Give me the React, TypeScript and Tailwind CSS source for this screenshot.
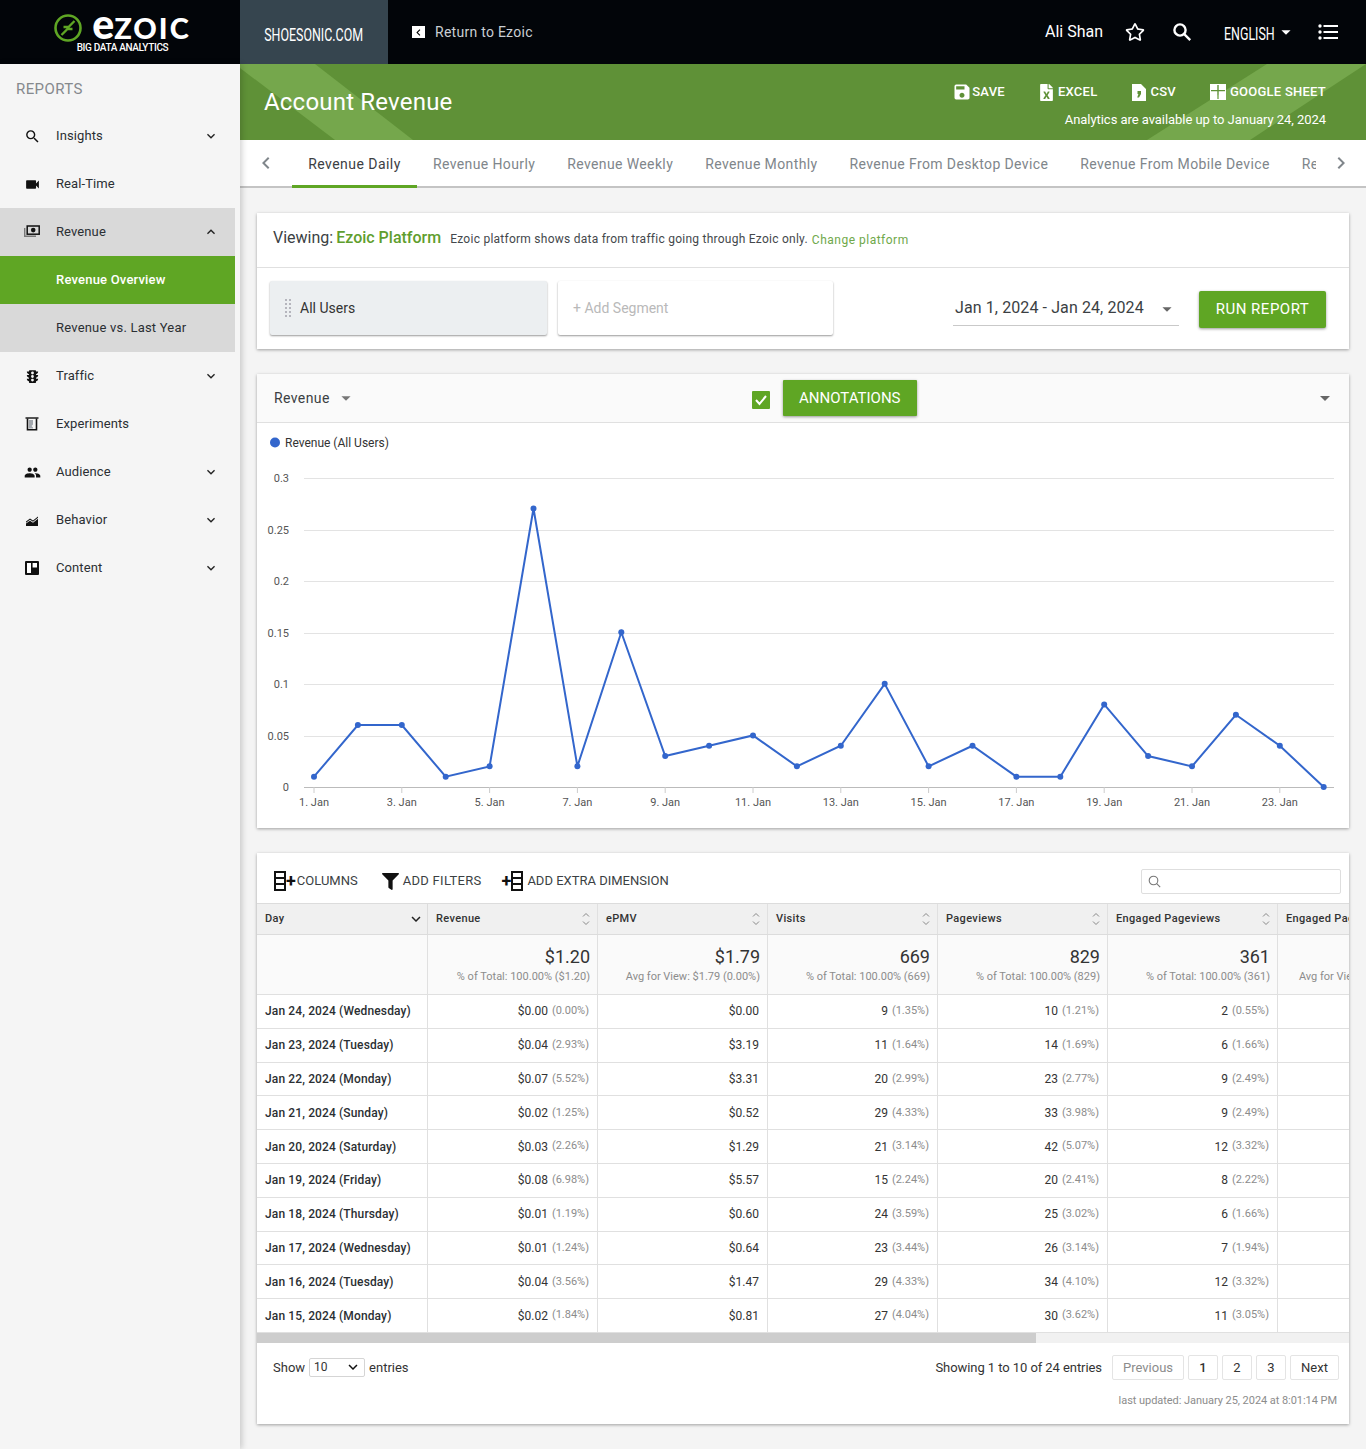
import { FaFileExcel, FaFilter, FaRegStar } from "react-icons/fa";
import {
  MdArrowDropDown,
  MdChevronLeft,
  MdChevronRight,
  MdExpandLess,
  MdExpandMore,
  MdGroup,
  MdSave,
  MdSearch,
  MdTraffic,
  MdVideocam,
} from "react-icons/md";

const VALUES = [0.01, 0.06, 0.06, 0.01, 0.02, 0.27, 0.02, 0.15, 0.03, 0.04, 0.05, 0.02, 0.04, 0.1, 0.02, 0.04, 0.01, 0.01, 0.08, 0.03, 0.02, 0.07, 0.04, 0];
const TABS = ["Revenue Hourly", "Revenue Weekly", "Revenue Monthly", "Revenue From Desktop Device", "Revenue From Mobile Device"];
const COLUMNS = ["Revenue", "ePMV", "Visits", "Pageviews", "Engaged Pageviews"];

const TOTALS = [
  { value: "$1.20", note: "% of Total: 100.00% ($1.20)" },
  { value: "$1.79", note: "Avg for View: $1.79 (0.00%)" },
  { value: "669", note: "% of Total: 100.00% (669)" },
  { value: "829", note: "% of Total: 100.00% (829)" },
  { value: "361", note: "% of Total: 100.00% (361)" },
];

const ROWS = [
  ["Jan 24, 2024 (Wednesday)", "$0.00", "(0.00%)", "$0.00", "9", "(1.35%)", "10", "(1.21%)", "2", "(0.55%)"],
  ["Jan 23, 2024 (Tuesday)", "$0.04", "(2.93%)", "$3.19", "11", "(1.64%)", "14", "(1.69%)", "6", "(1.66%)"],
  ["Jan 22, 2024 (Monday)", "$0.07", "(5.52%)", "$3.31", "20", "(2.99%)", "23", "(2.77%)", "9", "(2.49%)"],
  ["Jan 21, 2024 (Sunday)", "$0.02", "(1.25%)", "$0.52", "29", "(4.33%)", "33", "(3.98%)", "9", "(2.49%)"],
  ["Jan 20, 2024 (Saturday)", "$0.03", "(2.26%)", "$1.29", "21", "(3.14%)", "42", "(5.07%)", "12", "(3.32%)"],
  ["Jan 19, 2024 (Friday)", "$0.08", "(6.98%)", "$5.57", "15", "(2.24%)", "20", "(2.41%)", "8", "(2.22%)"],
  ["Jan 18, 2024 (Thursday)", "$0.01", "(1.19%)", "$0.60", "24", "(3.59%)", "25", "(3.02%)", "6", "(1.66%)"],
  ["Jan 17, 2024 (Wednesday)", "$0.01", "(1.24%)", "$0.64", "23", "(3.44%)", "26", "(3.14%)", "7", "(1.94%)"],
  ["Jan 16, 2024 (Tuesday)", "$0.04", "(3.56%)", "$1.47", "29", "(4.33%)", "34", "(4.10%)", "12", "(3.32%)"],
  ["Jan 15, 2024 (Monday)", "$0.02", "(1.84%)", "$0.81", "27", "(4.04%)", "30", "(3.62%)", "11", "(3.05%)"],
];

function ColumnsIcon() {
  return (
    <svg width="12" height="20" viewBox="0 0 12 20" fill="none" stroke="#111" strokeWidth="2">
      <rect x="1" y="1" width="10" height="18" />
      <path d="M1 7h10M1 13h10" />
    </svg>
  );
}

function RevenueIcon() {
  return (
    <svg width="16" height="14" viewBox="0 0 16 14" fill="none">
      <path d="M0.700 3v8.300H12" stroke="#777" strokeWidth="1.400" />
      <rect x="3.200" y="1" width="12" height="8.200" stroke="#111" strokeWidth="1.500" />
      <circle cx="9.200" cy="5.100" r="2.300" fill="#111" />
    </svg>
  );
}

function BehaviorIcon() {
  return (
    <svg width="14" height="14" viewBox="0 0 14 14" fill="#111">
      <path d="M1 8.500 5 5.500l3 2 5-4v1.200L8 8.800l-3-2-4 3z" />
      <path d="M1 10.500 5 7.800l3 2 5-4V13H1z" />
    </svg>
  );
}

function ExperimentIcon() {
  return (
    <svg width="14" height="14" viewBox="0 0 14 14" fill="none">
      <path d="M0.500 1h13" stroke="#111" strokeWidth="1.400" />
      <path d="M2.500 1.500v11.300h9V1.500" stroke="#111" strokeWidth="1.600" />
      <path d="M4 3h4v4.500L6.500 9 8 10.500V11.500H4z" fill="#a3a8ae" />
    </svg>
  );
}

function ContentIcon() {
  return (
    <svg width="14" height="14" viewBox="0 0 14 14">
      <rect width="14" height="14" rx="1" fill="#111" />
      <path d="M2 2h4v10H2zM7.600 2H12v4.500H7.600z" fill="#fff" />
    </svg>
  );
}

function Logo() {
  return (
    <div className="flex flex-col items-center pl-[5px]">
      <div className="flex items-center gap-[10px] h-[28px] mt-[14px]">
        <svg width="28" height="28" viewBox="0 0 28 28" fill="none" stroke="#5fa624" strokeWidth="2.600">
          <circle cx="14" cy="14" r="12.500" />
          <path d="M7.500 21l6-6h5M9.500 13h5l6-6" strokeWidth="2.300" />
        </svg>
        <span className="font-['Lato',sans-serif] font-black text-white leading-[28px] whitespace-nowrap flex items-baseline -translate-y-[2px]">
          <span className="text-[41px] leading-[28px]">e</span>
          <span className="text-[29px] leading-[28px] uppercase tracking-[2px]">zoic</span>
        </span>
      </div>
      <span className="text-white text-[10px] leading-none font-medium tracking-[-0.35px] mt-[1px]">BIG DATA ANALYTICS</span>
    </div>
  );
}

function Header() {
  return (
    <header className="h-16 bg-[#020509] flex items-stretch text-white">
      <div className="w-[240px] shrink-0 flex justify-center">
        <Logo />
      </div>
      <div className="w-[148px] bg-[#36454f] flex items-center justify-center pt-[5px] overflow-hidden">
        <span className="inline-block scale-x-[0.69] text-[18px] whitespace-nowrap">SHOESONIC.COM</span>
      </div>
      <div className="flex items-center gap-[10px] pl-[24px] text-[14px] tracking-[0.27px] text-[#c9ced3]">
        <span className="w-[13px] h-[12px] bg-white flex items-center justify-center">
          <MdChevronLeft className="text-black" size={13} />
        </span>
        Return to Ezoic
      </div>
      <div className="ml-auto flex items-center pr-[28px]">
        <span className="text-[16px]">Ali Shan</span>
        <FaRegStar className="ml-[22px]" size={20} />
        <svg className="ml-[27px]" width="20" height="20" viewBox="0 0 20 20" fill="none" stroke="white" strokeWidth="2.400">
          <circle cx="8" cy="8" r="5.600" />
          <path d="m12.200 12.200 6 6" />
        </svg>
        <span className="ml-[32px] w-[51px] inline-block">
          <span className="inline-block origin-left scale-x-[0.69] text-[18px] pt-[2px]">ENGLISH</span>
        </span>
        <MdArrowDropDown size={22} />
        <svg className="ml-[21px]" width="20" height="16" viewBox="0 0 20 16" fill="white">
          <circle cx="2" cy="2" r="1.700" />
          <circle cx="2" cy="8" r="1.700" />
          <circle cx="2" cy="14" r="1.700" />
          <path d="M5.500 1h14.500v2H5.500zM5.500 7h14.500v2H5.500zM5.500 13h14.500v2H5.500z" />
        </svg>
      </div>
    </header>
  );
}

function NavRow({ icon, label, chevron, tone }: { icon?: React.ReactNode; label: string; chevron?: "up" | "down"; tone?: string }) {
  return (
    <div className={`h-12 flex items-center text-[13px] tracking-[0.1px] ${tone ?? "text-[#2b2f33]"}`}>
      <span className="w-[56px] flex justify-center pl-[8px] shrink-0">{icon}</span>
      <span>{label}</span>
      {chevron === "down" && <MdExpandMore className="ml-auto mr-[16px] text-[#222]" size={16} />}
      {chevron === "up" && <MdExpandLess className="ml-auto mr-[16px] text-[#222]" size={16} />}
    </div>
  );
}

function Sidebar() {
  return (
    <aside className="w-[240px] shrink-0 bg-[#f5f5f5] shadow-[2px_0_6px_rgba(0,0,0,0.18)] z-10 self-stretch">
      <div className="w-[235px]">
        <div className="h-12 flex items-center pl-4 pt-[2px] text-[15px] tracking-[0.4px] text-[#85898d]">REPORTS</div>
        <NavRow icon={<MdSearch size={17} className="text-[#111]" />} label="Insights" chevron="down" />
        <NavRow icon={<MdVideocam size={17} className="text-[#111]" />} label="Real-Time" />
        <div className="bg-[#d9d9d9]">
          <NavRow icon={<RevenueIcon />} label="Revenue" chevron="up" />
          <div className="bg-[#5fa624]">
            <NavRow label="Revenue Overview" tone="text-white font-medium tracking-[0.2px]" />
          </div>
          <NavRow label="Revenue vs. Last Year" tone="text-[#2b2f33] tracking-[0.2px]" />
        </div>
        <NavRow icon={<MdTraffic size={17} className="text-[#111]" />} label="Traffic" chevron="down" />
        <NavRow icon={<ExperimentIcon />} label="Experiments" />
        <NavRow icon={<MdGroup size={17} className="text-[#111]" />} label="Audience" chevron="down" />
        <NavRow icon={<BehaviorIcon />} label="Behavior" chevron="down" />
        <NavRow icon={<ContentIcon />} label="Content" chevron="down" />
      </div>
    </aside>
  );
}

function Banner() {
  return (
    <div className="relative h-[76px] bg-[#5f9137] text-white flex justify-between overflow-hidden">
      <svg className="absolute inset-0" width="1126" height="76" viewBox="0 0 1126 76" fill="#75a74c">
        <path d="M0 4 95 76H173L75 0H0z" />
        <path d="M1027 0 907 76H1010L1126 0z" />
      </svg>
      <h1 className="relative text-[24px] tracking-[0.2px] pl-6 pt-[22px] leading-[32px] text-white">Account Revenue</h1>
      <div className="relative pr-[40px] pt-[19px] flex flex-col items-end">
        <div className="flex items-center text-[13px] tracking-[0.25px] font-medium h-[18px]">
          <MdSave size={20} />
          SAVE
          <FaFileExcel size={17} className="ml-[33px] mr-[3px]" />
          EXCEL
          <svg className="ml-[35px] mr-[4px]" width="14" height="17" viewBox="0 0 14 17" fill="white">
            <path fillRule="evenodd" d="M0 0h9l5 5v12H0zM5.500 7h3.500v3l-2 3.500H5.200l1.200-3.500H5.500z" />
          </svg>
          CSV
          <svg className="ml-[34px] mr-[4px]" width="16" height="16" viewBox="0 0 16 16" fill="white">
            <path fillRule="evenodd" d="M0 0h16v16H0zM7.300 1v5H1v1.200h6.300V15h1.400V7.200H15V6H8.700V1z" />
          </svg>
          GOOGLE SHEET
        </div>
        <div className="text-[13px] mt-[10px] leading-[18px] tracking-[-0.05px]">Analytics are available up to January 24, 2024</div>
      </div>
    </div>
  );
}

function Tabs() {
  return (
    <div className="h-12 bg-white border-b-2 border-[#c4c4c4] flex items-stretch text-[14px] tracking-[0.38px] text-[#80868b]">
      <div className="w-[52px] flex items-center justify-center">
        <MdChevronLeft size={24} className="text-[#80868b]" />
      </div>
      <div className="w-[125px] flex items-center justify-center text-[#3c4043] border-b-[3px] border-[#5fa624] h-[48px] pt-[3px] tracking-[0.45px]">Revenue Daily</div>
      {TABS.map((t) => (
        <div key={t} className="px-4 flex items-center whitespace-nowrap pt-[2px]">{t}</div>
      ))}
      <div className="w-[30px] pl-4 overflow-hidden flex items-center pt-[2px]">Re</div>
      <div className="flex items-center ml-[13px]">
        <MdChevronRight size={24} />
      </div>
    </div>
  );
}

function SegmentCard() {
  return (
    <section className="bg-white shadow-[0_1px_3px_rgba(0,0,0,0.35)] h-[136px]">
      <div className="h-[55px] border-b border-[#e0e0e0] flex items-baseline pl-4 pt-[13px] whitespace-nowrap">
        <span className="text-[16px] text-[#3b3f43]">Viewing:</span>
        <span className="text-[16px] font-medium text-[#5f9e2e] ml-[3px]">Ezoic Platform</span>
        <span className="text-[12px] text-[#44484c] ml-[9px] tracking-[0.25px]">Ezoic platform shows data from traffic going through Ezoic only.</span>
        <span className="text-[12px] text-[#6fa84a] ml-[4px] tracking-[0.5px] translate-y-px">Change platform</span>
      </div>
      <div className="flex items-start pt-[13px] pl-[13px]">
        <div className="w-[277px] h-[54px] bg-[#eceff1] rounded-[2px] shadow-[0_1px_2px_rgba(0,0,0,0.4)] flex items-center text-[14px] text-[#333]">
          <span className="w-[8px] h-[20px] ml-[14px] mr-[8px] bg-[radial-gradient(#b5b5bd_1px,transparent_1.200px)] bg-[length:4px_4px]" />
          All Users
        </div>
        <div className="w-[275px] h-[54px] ml-[11px] bg-white rounded-[2px] shadow-[0_1px_2px_rgba(0,0,0,0.4)] flex items-center pl-[15px] text-[14px] text-[#b9b9b9]">+ Add Segment</div>
        <div className="ml-[120px] mt-[9px] w-[226px] h-[36px] border-b border-[#c9c9c9] flex items-center pl-[2px] text-[16px] text-[#3b3f43] tracking-[0.1px]">
          Jan 1, 2024 - Jan 24, 2024
          <MdArrowDropDown size={22} className="ml-auto mr-[1px] mt-[3px] text-[#666]" />
        </div>
        <button className="ml-[20px] mt-[10px] w-[127px] h-[37px] bg-[#5fa624] text-white text-[15px] tracking-[0.5px] rounded-[2px] shadow-[0_1px_3px_rgba(0,0,0,0.4)]">RUN REPORT</button>
      </div>
    </section>
  );
}

function Chart() {
  const x = (i: number) => 314 + i * 43.9 - 257;
  const y = (v: number) => 787 - v * 1031.6 - 423;
  const pts = VALUES.map((v, i) => `${x(i)},${y(v)}`).join(" ");
  const grid = [
    { v: 0.3, label: "0.3" },
    { v: 0.25, label: "0.25" },
    { v: 0.2, label: "0.2" },
    { v: 0.15, label: "0.15" },
    { v: 0.1, label: "0.1" },
    { v: 0.05, label: "0.05" },
    { v: 0, label: "0" },
  ];
  return (
    <svg width="1092" height="405" viewBox="0 0 1092 405" className="block font-[Roboto,sans-serif]">
      <circle cx="18" cy="19.500" r="5" fill="#3366cc" />
      <text x="28" y="24" fontSize="12" fill="#333">Revenue (All Users)</text>
      {grid.map((g) => (
        <g key={g.label}>
          <line x1="47" x2="1077" y1={Math.ceil(y(g.v)) + 0.5} y2={Math.ceil(y(g.v)) + 0.5} stroke={g.v === 0 ? "#bbb" : "#e3e3e3"} />
          <text x="32" y={Math.ceil(y(g.v)) + 4} fontSize="11" fill="#555" textAnchor="end">{g.label}</text>
        </g>
      ))}
      {VALUES.map((_, i) =>
        i % 2 === 0 ? <line key={i} x1={x(i)} x2={x(i)} y1="364" y2="370" stroke="#ccc" /> : null
      )}
      {VALUES.map((_, i) =>
        i % 2 === 0 ? (
          <text key={i} x={x(i)} y="383" fontSize="11" fill="#555" textAnchor="middle">{`${i + 1}. Jan`}</text>
        ) : null
      )}
      <polyline points={pts} fill="none" stroke="#3366cc" strokeWidth="2" />
      {VALUES.map((v, i) => (
        <circle key={i} cx={x(i)} cy={y(v)} r="3" fill="#3366cc" />
      ))}
    </svg>
  );
}

function ChartCard() {
  return (
    <section className="bg-white shadow-[0_1px_3px_rgba(0,0,0,0.35)] h-[454px] mt-[25px]">
      <div className="h-[49px] bg-[#fafafa] border-b border-[#e0e0e0] flex items-center pl-[17px] text-[14px] tracking-[0.4px] text-[#3b3f43]">
        <span>Revenue</span>
        <MdArrowDropDown size={22} className="ml-[5px] text-[#777]" />
        <span className="ml-[395px] w-[18px] h-[18px] mt-[3px] bg-[#5fa624] rounded-[1px] flex items-center justify-center">
          <svg width="14" height="12" viewBox="0 0 14 12" fill="none" stroke="white" strokeWidth="2">
            <path d="m2 6 3.500 4L12 2" />
          </svg>
        </span>
        <button className="ml-[13px] w-[134px] h-[36px] bg-[#5fa624] text-white text-[15px] tracking-normal rounded-[1px] shadow-[0_1px_3px_rgba(0,0,0,0.4)]">ANNOTATIONS</button>
        <MdArrowDropDown size={24} className="ml-auto mr-[12px] text-[#666]" />
      </div>
      <Chart />
    </section>
  );
}

function SortArrows() {
  return (
    <svg className="ml-auto mr-[7px]" width="8" height="14" viewBox="0 0 8 14" fill="none" stroke="#888" strokeWidth="1">
      <path d="m1 4.500 3-3 3 3M1 9.500l3 3 3-3" />
    </svg>
  );
}

function NumberCell({ value, pct }: { value: string; pct?: string }) {
  return (
    <div className="w-[170px] shrink-0 border-r border-[#e0e0e0] h-full flex items-center justify-end pr-2">
      {value}
      {pct && <span className="ml-[4px] text-[11px] text-[#8c8c8c]">{pct}</span>}
    </div>
  );
}

function DataTable() {
  const cell = "w-[170px] shrink-0 border-r border-[#e0e0e0] h-full";
  return (
    <div className="overflow-hidden">
      <div className="w-[1300px]">
        <div className="h-[32px] bg-[#f0f0f0] flex items-center border-y border-[#dcdcdc] text-[11px] tracking-[0.35px] font-medium text-[#333]">
          <div className="w-[171px] shrink-0 border-r border-[#dcdcdc] h-full flex items-center pl-2">
            Day
            <MdExpandMore size={18} className="ml-auto mr-[2px] text-[#222]" />
          </div>
          {COLUMNS.map((c) => (
            <div key={c} className={`${cell} flex items-center pl-2`}>
              {c}
              <SortArrows />
            </div>
          ))}
          <div className="pl-2 whitespace-nowrap">Engaged Pages</div>
        </div>
        <div className="h-[60px] bg-[#fafafa] flex border-b border-[#e0e0e0]">
          <div className="w-[171px] shrink-0 border-r border-[#e0e0e0]" />
          {TOTALS.map((t) => (
            <div key={t.value} className={`${cell} text-right pr-[7px] pt-[11px]`}>
              <div className="text-[18px] leading-[22px] text-[#333]">{t.value}</div>
              <div className="text-[11px] leading-[14px] mt-[2px] text-[#8c8c8c] whitespace-nowrap">{t.note}</div>
            </div>
          ))}
          <div className="w-[149px] text-right pt-[35px] text-[11px] leading-[14px] text-[#8c8c8c] whitespace-nowrap">Avg for View: 2.30 (0.00%)</div>
        </div>
        {ROWS.map((r) => (
          <div key={r[0]} className="h-[33.8px] flex border-b border-[#e0e0e0] items-center text-[12px] text-[#333]">
            <div className="w-[171px] shrink-0 border-r border-[#e0e0e0] h-full flex items-center pl-2 font-medium tracking-[0.13px] text-[#2b2f33] whitespace-nowrap">{r[0]}</div>
            <NumberCell value={r[1]} pct={r[2]} />
            <NumberCell value={r[3]} />
            <NumberCell value={r[4]} pct={r[5]} />
            <NumberCell value={r[6]} pct={r[7]} />
            <NumberCell value={r[8]} pct={r[9]} />
          </div>
        ))}
      </div>
    </div>
  );
}

function TableCard() {
  return (
    <section className="bg-white shadow-[0_1px_3px_rgba(0,0,0,0.35)] h-[571px] mt-[25px]">
      <div className="h-[50px] flex items-center pl-[17px] pt-[6px] text-[13px] text-[#3b3f43]">
        <ColumnsIcon />
        <span className="text-[18px] font-bold text-[#111] leading-none">+</span>
        <span className="ml-[1px]">COLUMNS</span>
        <FaFilter size={17} className="ml-[24px] mr-[4px] text-[#111]" />
        <span className="tracking-[0.3px]">ADD FILTERS</span>
        <span className="ml-[20px] text-[18px] font-bold text-[#111] leading-none">+</span>
        <ColumnsIcon />
        <span className="ml-[4px]">ADD EXTRA DIMENSION</span>
        <div className="ml-auto mr-[8px] w-[200px] h-[25px] border border-[#dedede] rounded-[2px] flex items-center pl-[6px]">
          <svg width="13" height="13" viewBox="0 0 13 13" fill="none" stroke="#777" strokeWidth="1.100">
            <circle cx="5.500" cy="5.500" r="4.300" />
            <path d="m8.700 8.700 3.500 3.500" />
          </svg>
        </div>
      </div>
      <DataTable />
      <div className="h-[10px] bg-[#f1f1f1]">
        <div className="w-[779px] h-full bg-[#cdcdcd]" />
      </div>
      <div className="flex items-start pl-4 pr-[10px] pt-[12px] text-[13px] text-[#333]">
        <div className="flex items-center h-[25px]">
          Show
          <span className="mx-[4px] w-[56px] h-[19px] border border-[#d5d5d5] rounded-[2px] flex items-center pl-[4px] pr-[2px] bg-white text-[12px]">
            10
            <MdExpandMore size={18} className="ml-auto text-[#111]" />
          </span>
          entries
        </div>
        <div className="ml-auto flex items-center gap-[4px]">
          <span className="mr-[6px] tracking-[-0.07px]">Showing 1 to 10 of 24 entries</span>
          <span className="h-[25px] w-[72px] justify-center border border-[#e4e4e4] rounded-[2px] flex items-center text-[#8c8c8c]">Previous</span>
          <span className="h-[25px] w-[30px] border border-[#e4e4e4] rounded-[2px] flex items-center justify-center font-medium">1</span>
          <span className="h-[25px] w-[30px] border border-[#e4e4e4] rounded-[2px] flex items-center justify-center">2</span>
          <span className="h-[25px] w-[30px] border border-[#e4e4e4] rounded-[2px] flex items-center justify-center">3</span>
          <span className="h-[25px] w-[49px] justify-center border border-[#e4e4e4] rounded-[2px] flex items-center">Next</span>
        </div>
      </div>
      <div className="text-right pr-[12px] pt-[13px] text-[11px] tracking-[-0.05px] text-[#8c8c8c]">last updated: January 25, 2024 at 8:01:14 PM</div>
    </section>
  );
}

export default function App() {
  return (
    <div className="w-[1366px] h-[1449px] overflow-hidden bg-[#f4f4f4] font-[Roboto,sans-serif] flex flex-col">
      <Header />
      <div className="flex flex-1">
        <Sidebar />
        <main className="flex-1 min-w-0">
          <Banner />
          <Tabs />
          <div className="pl-[17px] pr-[17px] pt-[25px]">
            <SegmentCard />
            <ChartCard />
            <TableCard />
          </div>
        </main>
      </div>
    </div>
  );
}
